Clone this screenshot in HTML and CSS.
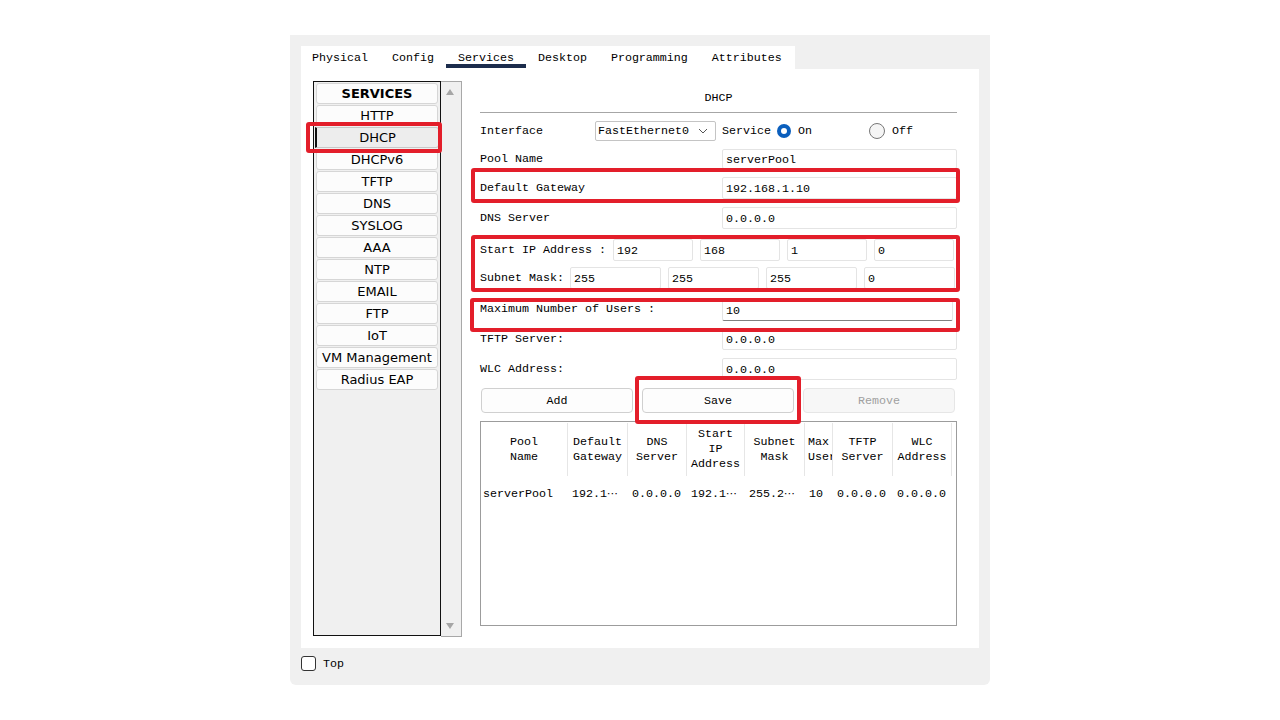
FILE: index.html
```html
<!DOCTYPE html>
<html>
<head>
<meta charset="utf-8">
<link rel="stylesheet" href="styles.css">
</head>
<body>
<div class="window">
  <div class="tabs">
    <div class="tab">Physical</div>
    <div class="tab">Config</div>
    <div class="tab active">Services</div>
    <div class="tab">Desktop</div>
    <div class="tab">Programming</div>
    <div class="tab">Attributes</div>
  </div>
  <div class="panel">
    <div class="services">
      <div class="svc-list">
        <div class="svc head">SERVICES</div>
        <div class="svc">HTTP</div>
        <div class="svc sel">DHCP</div>
        <div class="svc">DHCPv6</div>
        <div class="svc">TFTP</div>
        <div class="svc">DNS</div>
        <div class="svc">SYSLOG</div>
        <div class="svc">AAA</div>
        <div class="svc">NTP</div>
        <div class="svc">EMAIL</div>
        <div class="svc">FTP</div>
        <div class="svc">IoT</div>
        <div class="svc">VM Management</div>
        <div class="svc">Radius EAP</div>
      </div>
      <div class="scrollbar">
        <span class="arr up"></span>
        <span class="arr down"></span>
      </div>
    </div>
    <div class="form">
      <div class="title">DHCP</div>
      <div class="rule"></div>
      <div class="rows">
        <div class="row short">
          <span class="lbl w-iface">Interface</span>
          <div class="select">
            <span>FastEthernet0</span>
            <svg width="10" height="6" viewBox="0 0 10 6"><polyline points="1,1 5,5 9,1" fill="none" stroke="#555" stroke-width="1"/></svg>
          </div>
          <span class="svc-lbl">Service</span>
          <span class="radio on"></span>
          <span class="opt">On</span>
          <span class="radio off"></span>
          <span class="opt">Off</span>
        </div>
        <div class="row short">
          <span class="lbl">Pool Name</span>
          <div class="input wide">serverPool</div>
        </div>
        <div class="row">
          <span class="lbl">Default Gateway</span>
          <div class="input wide">192.168.1.10</div>
        </div>
        <div class="row">
          <span class="lbl">DNS Server</span>
          <div class="input wide">0.0.0.0</div>
        </div>
        <div class="row octets r-start">
          <span class="lbl w-start">Start IP Address :</span>
          <div class="input oct-a">192</div>
          <div class="input oct-a">168</div>
          <div class="input oct-a">1</div>
          <div class="input oct-a">0</div>
        </div>
        <div class="row octets r-mask">
          <span class="lbl w-mask">Subnet Mask:</span>
          <div class="input oct-b">255</div>
          <div class="input oct-b">255</div>
          <div class="input oct-b">255</div>
          <div class="input oct-b">0</div>
        </div>
        <div class="row r-max">
          <span class="lbl lbl-top">Maximum Number of Users :</span>
          <div class="input wide focus">10</div>
        </div>
        <div class="row r-tftp">
          <span class="lbl">TFTP Server:</span>
          <div class="input wide">0.0.0.0</div>
        </div>
        <div class="row">
          <span class="lbl">WLC Address:</span>
          <div class="input wide">0.0.0.0</div>
        </div>
      </div>
      <div class="btns">
        <div class="btn">Add</div>
        <div class="btn">Save</div>
        <div class="btn disabled">Remove</div>
      </div>
      <div class="table">
        <div class="thead">
          <div class="th"><span>Pool</span><span>Name</span></div>
          <div class="th"><span>Default</span><span>Gateway</span></div>
          <div class="th"><span>DNS</span><span>Server</span></div>
          <div class="th"><span>Start</span><span>IP</span><span>Address</span></div>
          <div class="th"><span>Subnet</span><span>Mask</span></div>
          <div class="th narrow"><span>Max</span><span>Users</span></div>
          <div class="th"><span>TFTP</span><span>Server</span></div>
          <div class="th"><span>WLC</span><span>Address</span></div>
          <div class="th last"></div>
        </div>
        <div class="trow">
          <div class="td">serverPool</div>
          <div class="td">192.1<span class="ell">⋯</span></div>
          <div class="td">0.0.0.0</div>
          <div class="td">192.1<span class="ell">⋯</span></div>
          <div class="td">255.2<span class="ell">⋯</span></div>
          <div class="td">10</div>
          <div class="td">0.0.0.0</div>
          <div class="td">0.0.0.0</div>
          <div class="td"></div>
        </div>
      </div>
    </div>
  </div>
  <div class="footer">
    <span class="check"></span>
    <span class="top-lbl">Top</span>
  </div>
  <div class="mark m-dhcp"></div>
  <div class="mark m-gw"></div>
  <div class="mark m-ip"></div>
  <div class="mark m-max"></div>
  <div class="mark m-save"></div>
</div>
</body>
</html>
```
FILE: styles.css
```css
html, body {
  margin: 0;
  padding: 0;
  background: #ffffff;
}

body {
  font-family: "Liberation Mono", "Courier New", monospace;
  font-size: 11.67px;
  color: #000;
}

.window {
  position: relative;
  margin: 35px 0 0 290px;
  width: 700px;
  height: 650px;
  box-sizing: border-box;
  padding: 11px 11px 0 11px;
  background: #f0f0f0;
  border-radius: 0 0 6px 6px;
  display: flex;
  flex-direction: column;
}

/* tabs */
.tabs {
  display: flex;
  width: 494px;
  height: 23px;
  background: #ffffff;
}

.tab {
  position: relative;
  padding: 1px 12px 0 12px;
  line-height: 22px;
  white-space: nowrap;
}

.tab:first-child {
  padding-left: 11px;
}

.tab.active::after {
  content: "";
  position: absolute;
  left: 0;
  right: 0;
  bottom: 1px;
  height: 4px;
  background: #1c2c4c;
}

/* panel */
.panel {
  display: flex;
  gap: 18px;
  height: 579px;
  box-sizing: border-box;
  padding: 12px 21px 12px 12px;
  background: #ffffff;
}

.services {
  display: flex;
  height: 556px;
}

.svc-list {
  width: 128px;
  height: 555px;
  box-sizing: border-box;
  border: 1px solid #111;
  background: #f0f0f0;
  padding: 1px 1px 0 2px;
  display: flex;
  flex-direction: column;
  gap: 1px;
  font-family: "DejaVu Sans", Verdana, sans-serif;
  font-size: 13px;
}

.svc {
  height: 21px;
  box-sizing: border-box;
  width: 122px;
  border: 1px solid #d6d6d6;
  border-radius: 3px;
  background: #fcfcfc;
  text-align: center;
  line-height: 19px;
  white-space: nowrap;
}

.svc.head {
  font-weight: bold;
}

.svc.sel {
  background: #ededed;
  border-color: #c8c8c8;
  border-left: 2px solid #111;
  border-radius: 0 3px 3px 0;
  margin-left: -1px;
  width: 124px;
}

.scrollbar {
  position: relative;
  width: 21px;
  height: 556px;
  box-sizing: border-box;
  border: 1px solid #a8a8a8;
  border-left: none;
  background: #f0f0f0;
}

.arr {
  position: absolute;
  left: 5px;
  width: 0;
  height: 0;
  border-left: 4.5px solid transparent;
  border-right: 4.5px solid transparent;
}

.arr.up {
  top: 7px;
  border-bottom: 6px solid #a6a6a6;
}

.arr.down {
  bottom: 7px;
  border-top: 6px solid #a6a6a6;
}

/* form */
.form {
  width: 477px;
  display: flex;
  flex-direction: column;
}

.title {
  margin-top: 7px;
  height: 20px;
  line-height: 20px;
  text-align: center;
}

.rule {
  margin-top: 4px;
  height: 1px;
  background: #a6a6a6;
}

.rows {
  margin-top: 8px;
  display: flex;
  flex-direction: column;
  gap: 8px;
}

.row {
  display: flex;
  align-items: center;
  height: 22px;
}

.row.short {
  height: 20px;
}

.r-start {
  margin-top: 2px;
}

.r-mask {
  margin-top: -2px;
}

.r-max {
  margin-top: 2px;
}

.r-tftp {
  margin-top: -1px;
}

.lbl {
  flex: 1;
  white-space: pre;
}

.lbl-top {
  align-self: flex-start;
  margin-top: 3px;
}

.w-iface {
  flex: 0 0 115px;
}

.w-start {
  flex: 0 0 133px;
}

.w-mask {
  flex: 0 0 90px;
}

.select {
  width: 121px;
  height: 20px;
  box-sizing: border-box;
  border: 1px solid #c4c4c4;
  border-radius: 2px;
  background: #fff;
  display: flex;
  align-items: center;
  justify-content: space-between;
  padding: 0 7px 0 2px;
}

.svc-lbl {
  margin-left: 6px;
}

.radio {
  width: 14px;
  height: 14px;
  box-sizing: border-box;
  border-radius: 50%;
}

.radio.on {
  margin-left: 6px;
  background: #0b5fbd;
  position: relative;
}

.radio.on::after {
  content: "";
  position: absolute;
  left: 4px;
  top: 4px;
  width: 6px;
  height: 6px;
  border-radius: 50%;
  background: #fff;
}

.radio.off {
  width: 16px;
  height: 16px;
  margin-left: 57px;
  border: 1px solid #777;
  background: #f5f5f5;
}

.opt {
  margin-left: 7px;
}

.input {
  height: 100%;
  box-sizing: border-box;
  border: 1px solid #e4e4e4;
  border-radius: 2px;
  background: #fff;
  display: flex;
  align-items: center;
  padding: 2px 0 0 3px;
  white-space: nowrap;
}

.input.wide {
  width: 235px;
}

.input.focus {
  width: 231px;
  margin-right: 4px;
  border-bottom: 1px solid #808080;
}

.octets {
  gap: 7px;
}

.octets .lbl {
  margin-right: -7px;
}

.oct-a {
  width: 80px;
}

.oct-b {
  width: 91px;
}

/* buttons */
.btns {
  margin-top: 8px;
  padding-left: 1px;
  display: flex;
  gap: 9px;
}

.btn {
  width: 152px;
  height: 25px;
  box-sizing: border-box;
  border: 1px solid #d0d0d0;
  border-radius: 4px;
  background: #fdfdfd;
  text-align: center;
  line-height: 25px;
}

.btn.disabled {
  color: #a0a0a0;
  background: #f7f7f7;
  border-color: #e6e6e6;
}

/* table */
.table {
  margin-top: 8px;
  height: 205px;
  box-sizing: border-box;
  border: 1px solid #9c9c9c;
  overflow: hidden;
}

.thead, .trow {
  display: grid;
  grid-template-columns: 87px 60px 59px 58px 60px 28px 60px 59px 1fr;
}

.thead {
  margin-top: 1px;
  height: 53px;
}

.th {
  border-right: 1px solid #e6e6e6;
  display: flex;
  flex-direction: column;
  align-items: center;
  justify-content: center;
  line-height: 15px;
  overflow: hidden;
  white-space: nowrap;
}

.th.narrow {
  align-items: flex-start;
  padding-left: 3px;
}

.th.last {
  border-right: none;
}

.trow {
  height: 36px;
  align-items: center;
}

.td {
  padding-left: 4px;
  white-space: nowrap;
  overflow: hidden;
}

.td:first-child {
  padding-left: 2px;
}

.ell {
  font-family: "DejaVu Sans", sans-serif;
  font-size: 11px;
}

/* footer */
.footer {
  flex: 1;
  display: flex;
  align-items: flex-start;
  padding-top: 8px;
  gap: 7px;
}

.check {
  width: 15px;
  height: 15px;
  box-sizing: border-box;
  border: 1px solid #333;
  border-radius: 3px;
  background: #fff;
}

.top-lbl {
  line-height: 16px;
}

/* red annotation marks */
.mark {
  position: absolute;
  box-sizing: border-box;
  border: 4px solid #e31e2a;
  border-radius: 3px;
}

.m-dhcp {
  left: 16px;
  top: 87px;
  width: 136px;
  height: 31px;
}

.m-gw {
  left: 181px;
  top: 133px;
  width: 489px;
  height: 35px;
}

.m-ip {
  left: 181px;
  top: 200px;
  width: 489px;
  height: 57px;
}

.m-max {
  left: 180px;
  top: 263px;
  width: 490px;
  height: 34px;
}

.m-save {
  left: 345px;
  top: 341px;
  width: 166px;
  height: 48px;
}
```
